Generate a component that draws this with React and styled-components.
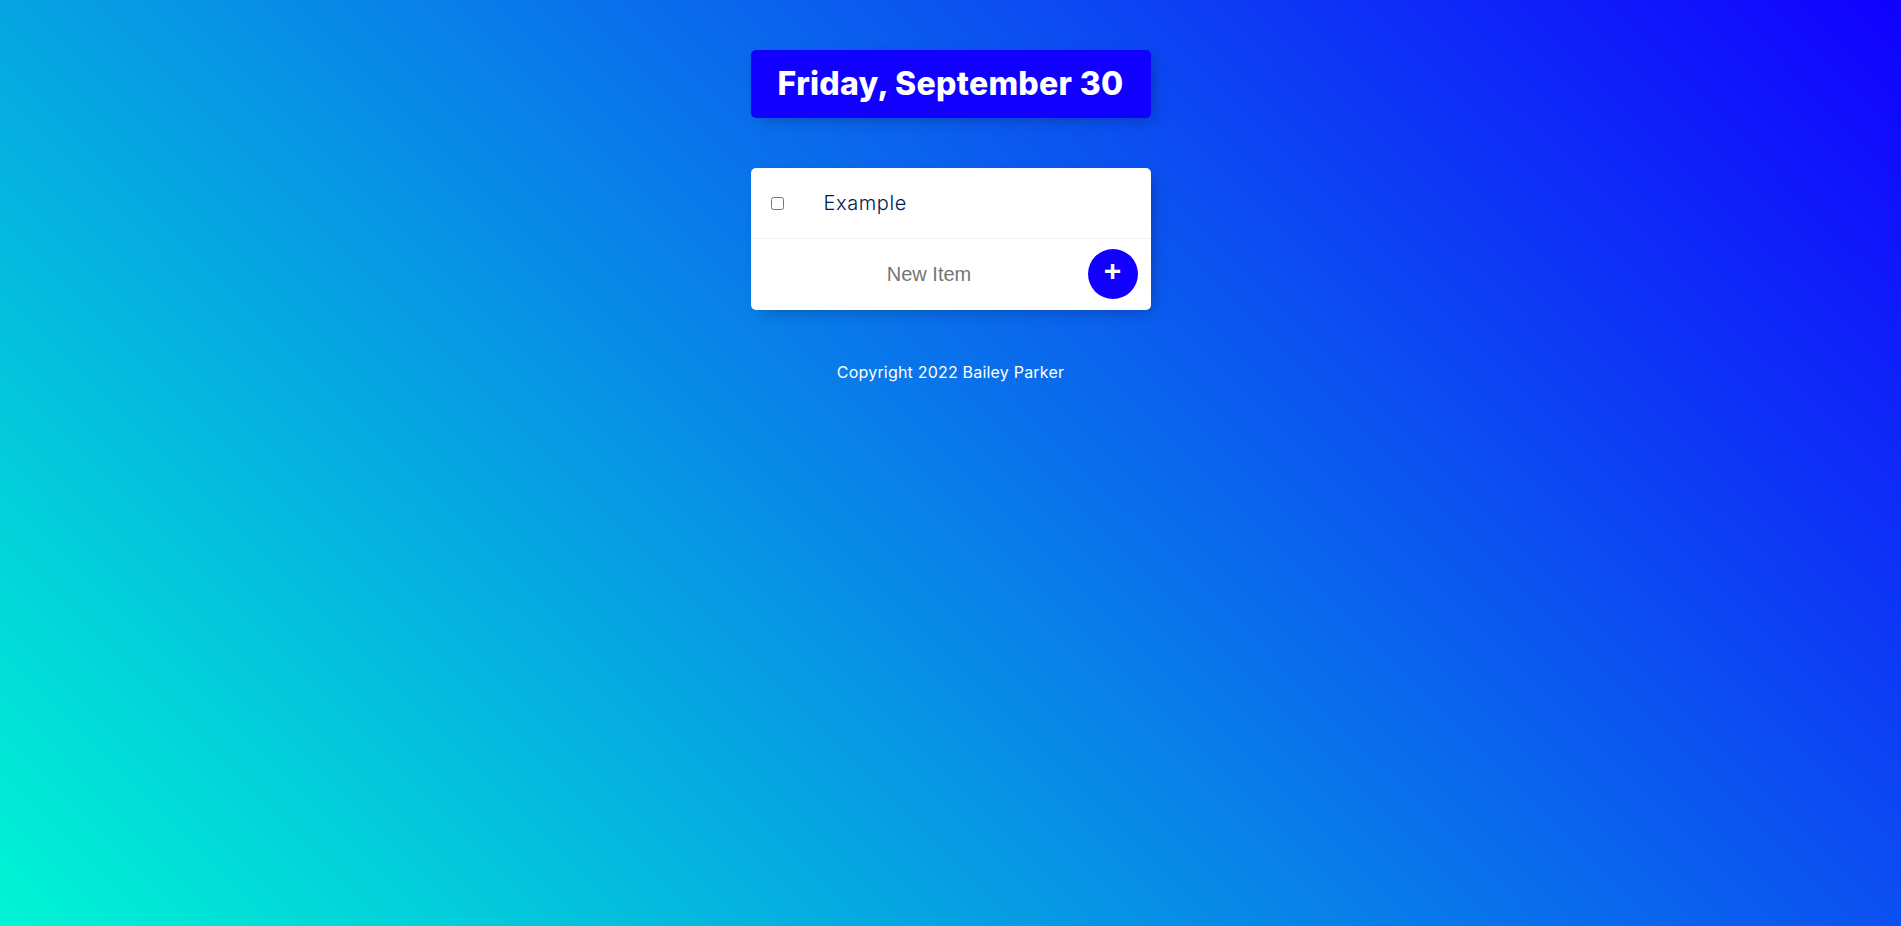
import React from "react";
import styled, { createGlobalStyle } from "styled-components";

const GlobalStyle = createGlobalStyle`
  html, body {
    margin: 0;
    padding: 0;
  }
  body {
    min-height: 100vh;
    background-image: linear-gradient(45deg, #00f5d4, #1100ff);
    background-attachment: fixed;
    font-family: Inter, "Noto Sans", sans-serif;
    overflow: hidden;
  }
  #root {
    min-height: 100vh;
    display: flow-root;
  }
`;

const Box = styled.div`
  max-width: 400px;
  margin: 50px auto;
  background: ${(p) => (p.$accent ? "#1100ff" : "#ffffff")};
  border-radius: 5px;
  box-shadow: 5px 5px 15px -5px rgba(0, 0, 0, 0.3);
  text-align: ${(p) => (p.$accent ? "center" : "left")};
`;

const Title = styled.h1`
  margin: 0;
  padding: 10px;
  font-family: Inter, "Noto Sans", sans-serif;
  font-size: 32px;
  font-weight: 800;
  line-height: 48px;
  color: #ffffff;
  letter-spacing: 0.3px;
`;

const Item = styled.div`
  min-height: 70px;
  display: flex;
  align-items: center;
  border-bottom: 1px solid ${(p) => (p.$last ? "transparent" : "#f1f1f1")};
`;

const Check = styled.input`
  margin: 20px;
  width: 13px;
  height: 13px;
`;

const ItemText = styled.p`
  margin: 0;
  padding: 20px;
  font-family: Inter, "Noto Sans", sans-serif;
  font-size: 20px;
  font-weight: 300;
  letter-spacing: 0.6px;
  color: #00204a;
`;

const Form = styled.form`
  min-height: 70px;
  display: flex;
  align-items: center;
  margin-left: 20px;
  text-align: center;
`;

const TextInput = styled.input`
  text-align: center;
  height: 60px;
  width: 313px;
  padding: 1px 2px;
  border: none;
  background: transparent;
  font-family: "Liberation Sans", Arial, sans-serif;
  font-size: 20px;
  color: #222;
  outline: none;
  &::placeholder {
    color: #757575;
  }
`;

const AddButton = styled.button`
  min-height: 50px;
  width: 50px;
  padding: 0 0 6px 0;
  border: 0;
  border-radius: 50%;
  background-color: #1100ff;
  color: #ffffff;
  font-family: "Liberation Sans", Arial, sans-serif;
  font-size: 30px;
  font-weight: 700;
  line-height: 1;
  cursor: pointer;
`;

const Footer = styled.footer`
  text-align: center;
  color: #ffffff;
  font-family: Inter, "Noto Sans", sans-serif;
  font-size: 16px;
  line-height: 24px;
  letter-spacing: 0.2px;
`;

export default function App() {
  return (
    <>
      <GlobalStyle />
      <Box $accent>
        <Title>Friday, September 30</Title>
      </Box>
      <Box>
        <Item>
          <Check type="checkbox" />
          <ItemText>Example</ItemText>
        </Item>
        <Item $last>
          <Form onSubmit={(e) => e.preventDefault()}>
            <TextInput type="text" placeholder="New Item" autoComplete="off" />
            <AddButton type="submit">+</AddButton>
          </Form>
        </Item>
      </Box>
      <Footer>Copyright 2022 Bailey Parker</Footer>
    </>
  );
}
